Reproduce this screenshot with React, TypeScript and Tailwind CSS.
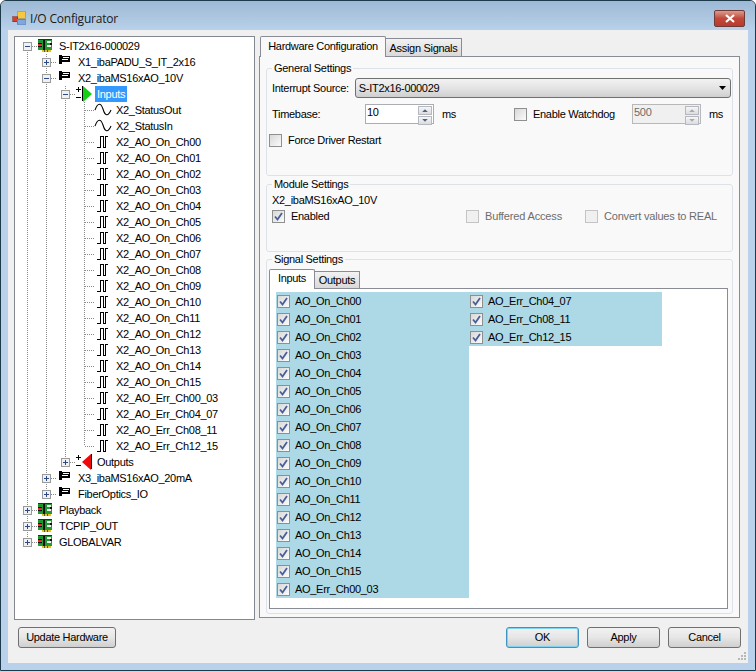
import type { ReactNode } from 'react';

type Cell = 'pipe' | 'blank' | 'first' | 'tee' | 'elbow' | 'teePlus' | 'teeMinus' | 'elbowPlus' | 'firstMinus';
type IconKind = 'chip' | 'flag' | 'ampIn' | 'ampOut' | 'sine' | 'pulse';

interface TreeRowProps {
  cells: Cell[];
  icon: IconKind;
  label: string;
  selected?: boolean;
}

const TreeCell = ({ kind }: { kind: Cell }) => {
  const up = kind !== 'blank' && !kind.startsWith('first');
  const down = kind === 'pipe' || kind === 'first' || kind === 'firstMinus' || kind.startsWith('tee');
  const across = kind !== 'pipe' && kind !== 'blank';
  const plus = kind.endsWith('Plus');
  const minus = kind.endsWith('Minus');
  return (
    <svg width="19" height="16" className="shrink-0" shapeRendering="crispEdges">
      {up && <line x1="9.5" y1="0" x2="9.5" y2="8" stroke="#8a8a8a" strokeDasharray="1 1" />}
      {down && <line x1="9.5" y1="8" x2="9.5" y2="16" stroke="#8a8a8a" strokeDasharray="1 1" />}
      {across && <line x1="10" y1="8.5" x2="19" y2="8.5" stroke="#8a8a8a" strokeDasharray="1 1" />}
      {(plus || minus) && (
        <>
          <rect x="5.5" y="4.5" width="8" height="8" fill="#f1f1f1" stroke="#9a9a9a" />
          <line x1="7" y1="8.5" x2="12" y2="8.5" stroke="#2b4a85" />
          {plus && <line x1="9.5" y1="6" x2="9.5" y2="11" stroke="#2b4a85" />}
        </>
      )}
    </svg>
  );
};

const TreeIcon = ({ kind }: { kind: IconKind }) => {
  if (kind === 'chip') {
    return (
      <svg width="19" height="16" className="shrink-0" shapeRendering="crispEdges">
        <rect x="1" y="2" width="14" height="10" fill="#1f9a34" />
        <rect x="1" y="1" width="14" height="1" fill="#123d18" />
        <rect x="1" y="3" width="4" height="1" fill="#e0262a" />
        <rect x="1" y="5" width="4" height="1" fill="#101010" />
        <rect x="1" y="6" width="4" height="1" fill="#e0262a" />
        <rect x="1" y="8" width="4" height="1" fill="#101010" />
        <rect x="1" y="9" width="4" height="1" fill="#e0262a" />
        <rect x="6" y="2" width="2" height="10" fill="#101010" />
        <rect x="10" y="3" width="4" height="2" fill="#f0f8e8" />
        <rect x="10" y="7" width="4" height="2" fill="#f0f8e8" />
        <rect x="13" y="5" width="2" height="2" fill="#101010" />
        <rect x="5" y="12" width="9" height="2" fill="#e6c020" />
        <rect x="7" y="12" width="1" height="2" fill="#5a5a20" />
        <rect x="10" y="12" width="1" height="2" fill="#5a5a20" />
      </svg>
    );
  }
  if (kind === 'flag') {
    return (
      <svg width="19" height="16" className="shrink-0" shapeRendering="crispEdges">
        <rect x="3" y="1" width="3" height="9" fill="#000" />
        <rect x="6" y="2" width="8" height="6" fill="#000" />
        <rect x="7" y="3" width="6" height="1" fill="#fff" />
        <rect x="6" y="5" width="6" height="1" fill="#fff" />
      </svg>
    );
  }
  if (kind === 'ampIn' || kind === 'ampOut') {
    const input = kind === 'ampIn';
    return (
      <svg width="19" height="16" className="shrink-0" shapeRendering="crispEdges">
        <path d="M1 3.5h5M3.5 1v5M1 11.5h5" stroke="#000" fill="none" />
        {input ? (
          <>
            <path d="M8 0 L17 8 L8 16 Z" fill="#12d012" shapeRendering="auto" />
            <rect x="7" y="0" width="1" height="15" fill="#000" />
          </>
        ) : (
          <>
            <path d="M16 0 L7 8 L16 16 Z" fill="#ee0a0a" shapeRendering="auto" />
            <rect x="16" y="0" width="1" height="15" fill="#000" />
          </>
        )}
      </svg>
    );
  }
  if (kind === 'sine') {
    return (
      <svg width="19" height="16" className="shrink-0">
        <path d="M1 8 C4 0 7 1 9 7 C11 14 14 15 17 8" stroke="#000" strokeWidth="1.1" fill="none" />
      </svg>
    );
  }
  return (
    <svg width="19" height="16" className="shrink-0" shapeRendering="crispEdges">
      <path d="M3 13.5 H6.5 V2.5 H9.5 V13.5 H11.5 V2.5 H13.5" stroke="#000" fill="none" />
    </svg>
  );
};

const TreeRow = ({ cells, icon, label, selected }: TreeRowProps) => (
  <div className="flex h-4 items-center">
    {cells.map((c, i) => (
      <TreeCell key={i} kind={c} />
    ))}
    <TreeIcon kind={icon} />
    <span
      className={`ml-[1px] px-[2px] leading-4 whitespace-nowrap ${
        selected ? 'bg-[#3399ff] text-white' : 'text-black'
      }`}
    >
      {label}
    </span>
  </div>
);

const Check = ({ checked, disabled }: { checked?: boolean; disabled?: boolean }) => (
  <span
    className={`flex h-[13px] w-[13px] shrink-0 items-center justify-center border ${
      disabled ? 'border-[#c4c4c4] bg-[#f0f0f0]' : 'border-[#8e8f8f] bg-gradient-to-br from-[#d8d8d8] to-[#fbfbfb]'
    }`}
  >
    {checked && (
      <svg width="11" height="11" viewBox="0 0 11 11">
        <path d="M2 5.5 L4.5 8.5 L9 2" stroke="#4a5f97" strokeWidth="1.8" fill="none" />
      </svg>
    )}
  </span>
);

const Spinner = ({ value, disabled }: { value: string; disabled?: boolean }) => (
  <div
    className={`flex h-[20px] w-[69px] border ${
      disabled ? 'border-[#b8b8b8] bg-[#f0f0f0] text-[#6d6d6d]' : 'border-[#abadb3] bg-white text-black'
    }`}
  >
    <span className="flex-1 pl-[1px] leading-[15px]">{value}</span>
    <div className="flex w-[16px] flex-col gap-px p-px">
      {['M4 6 L7.5 2.5 L11 6 Z', 'M4 2 L7.5 5.5 L11 2 Z'].map((d) => (
        <span
          key={d}
          className="flex flex-1 items-center justify-center border border-[#b5b8c0] bg-gradient-to-b from-[#f6f6f6] to-[#dcdcdc]"
        >
          <svg width="13" height="7" viewBox="0 0 15 8">
            <path d={d} fill={disabled ? '#a8a8a8' : '#4d6185'} />
          </svg>
        </span>
      ))}
    </div>
  </div>
);

const GroupBox = ({ title, className, children }: { title: string; className: string; children: ReactNode }) => (
  <div className={`rounded-[3px] border border-[#dce2e8] ${className}`}>
    <div className="-mt-[8px] h-[14px] w-fit bg-[#f9f9f9] px-[2px] leading-[14px]">{title}</div>
    {children}
  </div>
);

const WinButton = ({ label, primary }: { label: string; primary?: boolean }) => (
  <button
    className={`flex h-[21px] w-[73px] items-center justify-center rounded-[3px] border bg-gradient-to-b from-[#f2f2f2] via-[#e6e6e6] to-[#cfcfcf] text-black ${
      primary ? 'border-[#3c94c4] shadow-[inset_0_0_0_1px_#7fd3f0]' : 'border-[#707070]'
    }`}
  >
    {label}
  </button>
);

const LEVEL3 = (name: string, icon: IconKind, last = false): TreeRowProps => ({
  cells: ['pipe', 'pipe', 'pipe', last ? 'elbow' : 'tee'],
  icon,
  label: name,
});

const onChannels = Array.from({ length: 16 }, (_, i) => `AO_On_Ch${String(i).padStart(2, '0')}`);

const treeRows: TreeRowProps[] = [
  { cells: ['firstMinus'], icon: 'chip', label: 'S-IT2x16-000029' },
  { cells: ['pipe', 'teePlus'], icon: 'flag', label: 'X1_ibaPADU_S_IT_2x16' },
  { cells: ['pipe', 'teeMinus'], icon: 'flag', label: 'X2_ibaMS16xAO_10V' },
  { cells: ['pipe', 'pipe', 'teeMinus'], icon: 'ampIn', label: 'Inputs', selected: true },
  LEVEL3('X2_StatusOut', 'sine'),
  LEVEL3('X2_StatusIn', 'sine'),
  ...onChannels.map((n) => LEVEL3(`X2_${n}`, 'pulse')),
  LEVEL3('X2_AO_Err_Ch00_03', 'pulse'),
  LEVEL3('X2_AO_Err_Ch04_07', 'pulse'),
  LEVEL3('X2_AO_Err_Ch08_11', 'pulse'),
  LEVEL3('X2_AO_Err_Ch12_15', 'pulse', true),
  { cells: ['pipe', 'pipe', 'elbowPlus'], icon: 'ampOut', label: 'Outputs' },
  { cells: ['pipe', 'teePlus'], icon: 'flag', label: 'X3_ibaMS16xAO_20mA' },
  { cells: ['pipe', 'elbowPlus'], icon: 'flag', label: 'FiberOptics_IO' },
  { cells: ['teePlus'], icon: 'chip', label: 'Playback' },
  { cells: ['teePlus'], icon: 'chip', label: 'TCPIP_OUT' },
  { cells: ['elbowPlus'], icon: 'chip', label: 'GLOBALVAR' },
];

const signals = [...onChannels, 'AO_Err_Ch00_03'];
const signals2 = ['AO_Err_Ch04_07', 'AO_Err_Ch08_11', 'AO_Err_Ch12_15'];

const SignalColumn = ({ names }: { names: string[] }) => (
  <div className="flex w-[193px] flex-col self-start bg-[#add8e6]">
    {names.map((n) => (
      <div key={n} className="flex h-[18px] items-center gap-[5px] pl-[1px] text-black">
        <Check checked />
        <span>{n}</span>
      </div>
    ))}
  </div>
);

export default function App() {
  return (
    <div className="flex h-[671px] w-[756px] flex-col overflow-hidden rounded-t-[6px] border border-[#1c3a4a] bg-[#b9d1ea] font-['Liberation_Sans',sans-serif] text-[11px] tracking-[-0.3px] text-black">
      {/* Title bar */}
      <div className="flex h-[29px] shrink-0 items-center bg-gradient-to-b from-[#9db9d5] to-[#b9d1ea] pl-[11px] pr-[10px] pt-[5px]">
        <svg width="14" height="14" viewBox="0 0 14 14" shapeRendering="crispEdges">
          <rect x="5" y="0" width="8" height="7" fill="#f6c93c" stroke="#b58a1c" strokeWidth="0.6" />
          <rect x="0.5" y="5.5" width="5" height="5" fill="#d8402c" stroke="#8a2a1c" strokeWidth="0.6" />
          <rect x="5" y="8" width="8" height="5" fill="#7fa6de" stroke="#4a6fae" strokeWidth="0.6" />
        </svg>
        <span className="ml-[4px] flex-1 pt-[1px] font-['Open_Sans',sans-serif] text-[12px] tracking-[-0.2px] text-[#1a1a1a]">
          I/O Configurator
        </span>
        <button className="flex h-[17px] w-[31px] items-center justify-center rounded-[2px] border border-[#6e3a36] bg-gradient-to-b from-[#d99a8e] via-[#c0483a] to-[#b93a2e]">
          <svg width="12" height="9" viewBox="0 0 12 9">
            <path d="M2 1 L10 8 M10 1 L2 8" stroke="#fff" strokeWidth="2.2" />
          </svg>
        </button>
      </div>

      {/* Client area */}
      <div className="relative ml-[7px] mr-[7px] flex h-[633px] shrink-0 flex-col bg-[#f0f0f0] pl-[6px] pt-[6px]">
        <div className="flex gap-[4px]">
          {/* Tree */}
          <div className="h-[584px] w-[241px] shrink-0 border border-[#828790] bg-white pl-[3px] pt-[1px]">
            {treeRows.map((r) => (
              <TreeRow key={r.label} {...r} />
            ))}
          </div>

          {/* Right side */}
          <div className="flex w-[481px] flex-col">
            <div className="flex h-[21px] items-end pl-[1px]">
              <div className="relative z-10 flex h-[21px] w-[126px] items-center justify-center rounded-t-[2px] border border-b-0 border-[#898c95] bg-[#f9f9f9] pb-[2px]">
                Hardware Configuration
              </div>
              <div className="mb-[1px] flex h-[18px] w-[76px] items-center justify-center border border-b-0 border-l-0 border-[#898c95] bg-gradient-to-b from-[#f2f2f2] to-[#d9d9d9] pt-[1px]">
                Assign Signals
              </div>
            </div>
            <div className="-mt-[1px] flex h-[562px] flex-col border border-[#898c95] bg-[#f9f9f9] px-[6px] pt-[11px]">
              <GroupBox title="General Settings" className="h-[108px] shrink-0 pl-[5px] pr-[1px]">
                <div className="mt-[3px] flex h-[20px] items-center gap-[4px]">
                  <span className="w-[79px] whitespace-nowrap pt-[1px]">Interrupt Source:</span>
                  <div className="flex h-[20px] w-[377px] items-center rounded-[3px] border border-[#707070] bg-gradient-to-b from-[#f2f2f2] via-[#e4e4e4] to-[#cfcfcf] pl-[3px] pr-[3px]">
                    <span className="flex-1">S-IT2x16-000029</span>
                    <svg width="8" height="4" viewBox="0 0 8 4">
                      <path d="M0 0 L7 0 L3.5 4 Z" fill="#000" />
                    </svg>
                  </div>
                </div>
                <div className="mt-[6px] flex h-[20px] items-center">
                  <span className="w-[93px]">Timebase:</span>
                  <Spinner value="10" />
                  <span className="ml-[8px] w-[72px]">ms</span>
                  <Check />
                  <span className="ml-[6px] w-[99px]">Enable Watchdog</span>
                  <Spinner value="500" disabled />
                  <span className="ml-[8px]">ms</span>
                </div>
                <div className="-ml-[3px] mt-[8px] flex items-center gap-[6px]">
                  <Check />
                  <span>Force Driver Restart</span>
                </div>
              </GroupBox>

              <GroupBox title="Module Settings" className="mt-[8px] h-[68px] shrink-0 pl-[5px]">
                <div className="mt-[2px] h-[14px] leading-[14px]">X2_ibaMS16xAO_10V</div>
                <div className="mt-[2px] flex h-[14px] items-center">
                  <Check checked />
                  <span className="ml-[6px] w-[175px]">Enabled</span>
                  <Check disabled />
                  <span className="ml-[6px] w-[100px] tracking-[-0.15px] text-[#6d6d6d]">Buffered Access</span>
                  <Check disabled />
                  <span className="ml-[6px] tracking-[-0.2px] text-[#6d6d6d]">Convert values to REAL</span>
                </div>
              </GroupBox>

              <GroupBox title="Signal Settings" className="mt-[7px] flex h-[355px] shrink-0 flex-col pl-[2px] pr-[4px] [&>div:first-child]:ml-[3px]">
                <div className="mt-[3px] flex h-[20px] items-end">
                  <div className="relative z-10 flex h-[20px] w-[46px] items-center justify-center rounded-t-[2px] border border-b-0 border-[#898c95] bg-white pb-[2px]">
                    Inputs
                  </div>
                  <div className="mb-[1px] flex h-[17px] w-[45px] items-center justify-center border border-b-0 border-l-0 border-[#898c95] bg-gradient-to-b from-[#f2f2f2] to-[#d9d9d9]">
                    Outputs
                  </div>
                </div>
                <div className="-mt-[1px] flex h-[321px] border border-[#898c95] bg-white pl-[6px] pt-[3px]">
                  <SignalColumn names={signals} />
                  <SignalColumn names={signals2} />
                </div>
              </GroupBox>
            </div>
          </div>
        </div>

        {/* Footer */}
        <div className="mt-[7px] flex items-center pl-[4px] pr-[7px]">
          <button className="flex h-[21px] w-[98px] items-center justify-center rounded-[3px] border border-[#707070] bg-gradient-to-b from-[#f2f2f2] via-[#e6e6e6] to-[#cfcfcf]">
            Update Hardware
          </button>
          <div className="flex-1" />
          <div className="flex gap-[8px]">
            <WinButton label="OK" primary />
            <WinButton label="Apply" />
            <WinButton label="Cancel" />
          </div>
        </div>

        {/* Size grip */}
        <svg width="9" height="9" className="absolute bottom-[2px] right-[1px]" shapeRendering="crispEdges">
          <path d="M6 0h2v2H6zM3 3h2v2H3zM6 3h2v2H6zM0 6h2v2H0zM3 6h2v2H3zM6 6h2v2H6z" fill="#b8b8b8" />
        </svg>
      </div>
    </div>
  );
}
